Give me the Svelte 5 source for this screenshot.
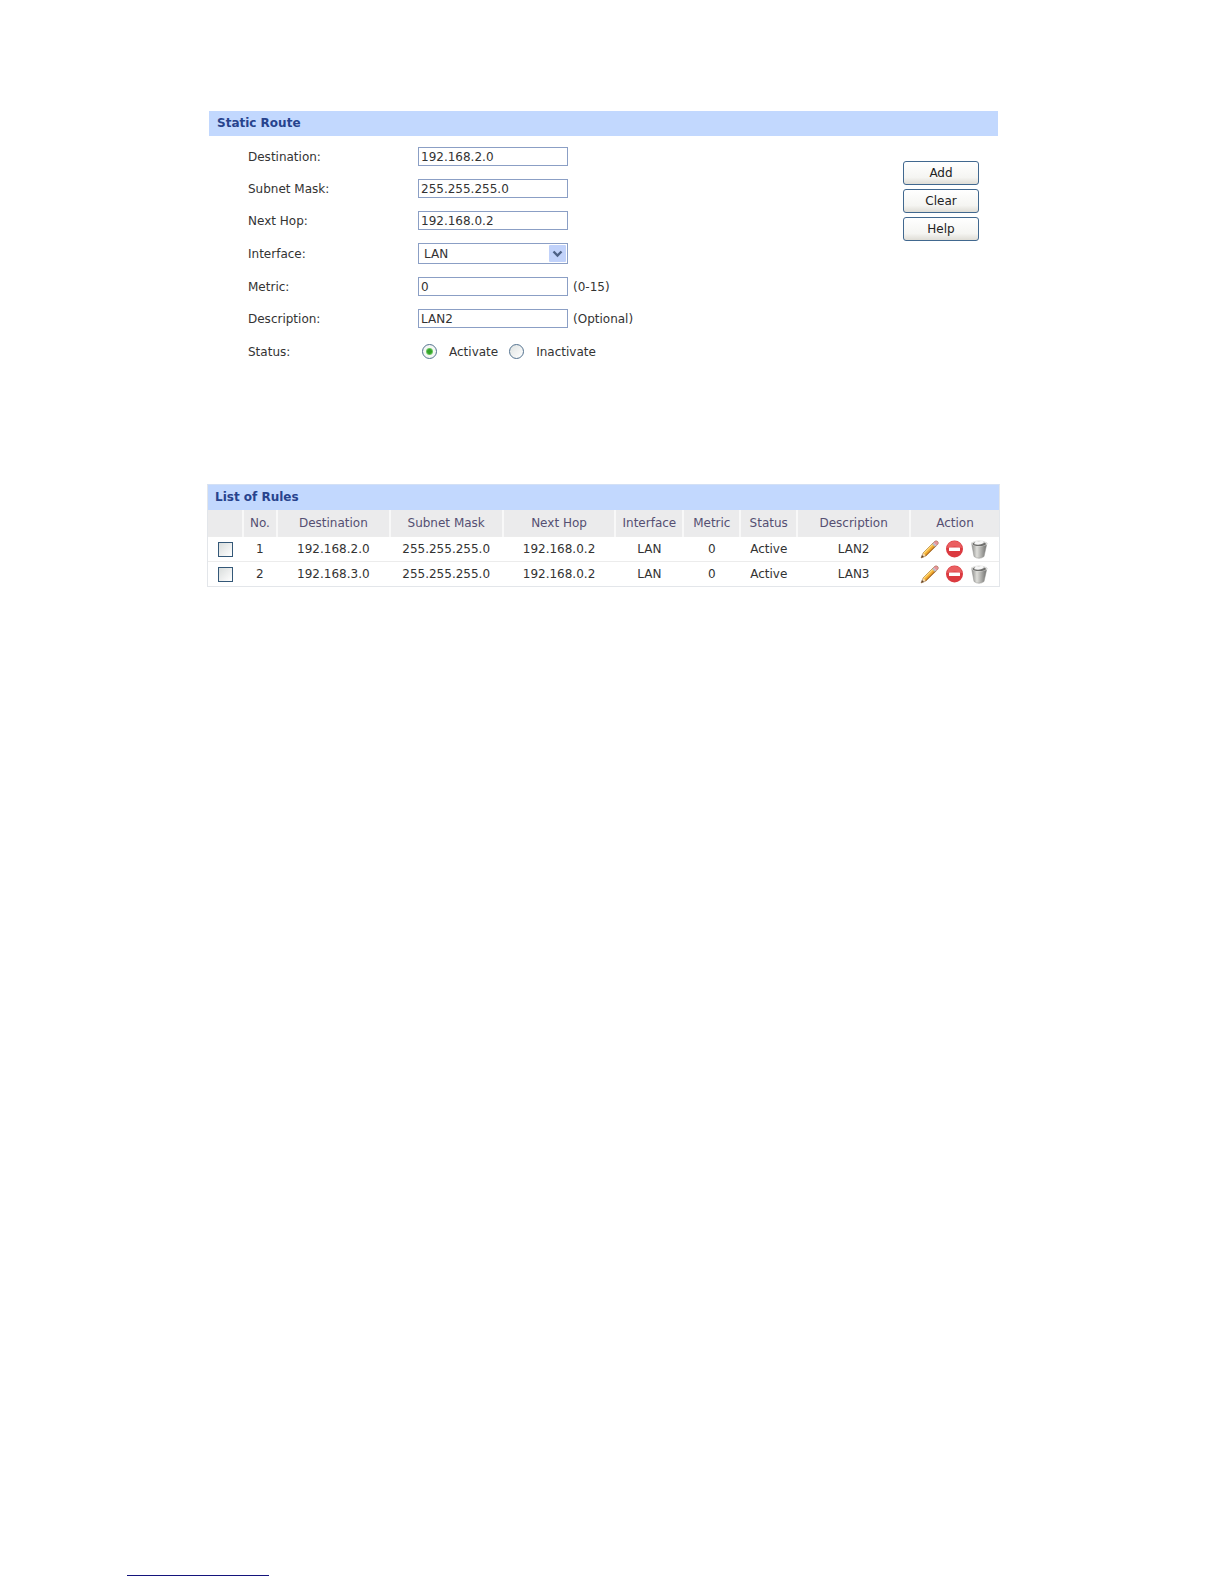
<script>
	const interfaces = ['LAN', 'WAN1', 'WAN2'];
	const columns = [
		{ key: 'no', label: 'No.', width: 34 },
		{ key: 'destination', label: 'Destination', width: 113 },
		{ key: 'mask', label: 'Subnet Mask', width: 113 },
		{ key: 'nextHop', label: 'Next Hop', width: 113 },
		{ key: 'iface', label: 'Interface', width: 68 },
		{ key: 'metric', label: 'Metric', width: 57 },
		{ key: 'status', label: 'Status', width: 57 },
		{ key: 'description', label: 'Description', width: 113 }
	];

	const emptyRoute = {
		destination: '',
		mask: '',
		nextHop: '',
		iface: 'LAN',
		metric: '0',
		description: '',
		status: 'Active'
	};

	let route = $state({
		destination: '192.168.2.0',
		mask: '255.255.255.0',
		nextHop: '192.168.0.2',
		iface: 'LAN',
		metric: '0',
		description: 'LAN2',
		status: 'Active'
	});

	let rules = $state([
		{
			destination: '192.168.2.0',
			mask: '255.255.255.0',
			nextHop: '192.168.0.2',
			iface: 'LAN',
			metric: '0',
			status: 'Active',
			description: 'LAN2',
			selected: false
		},
		{
			destination: '192.168.3.0',
			mask: '255.255.255.0',
			nextHop: '192.168.0.2',
			iface: 'LAN',
			metric: '0',
			status: 'Active',
			description: 'LAN3',
			selected: false
		}
	]);

	function addRoute(event) {
		event.preventDefault();
		rules.push({ ...route, selected: false });
	}

	function clearForm() {
		route = { ...emptyRoute };
	}

	function editRule(rule) {
		const { selected, ...values } = rule;
		route = values;
	}

	function toggleRule(rule) {
		rule.status = rule.status === 'Active' ? 'Inactive' : 'Active';
	}

	function removeRule(index) {
		rules.splice(index, 1);
	}
</script>

{#snippet textRow(id, label, key, hint)}
	<div class="row">
		<label class="name" for={id}>{label}</label>
		<input class="text" type="text" {id} bind:value={route[key]} />
		{#if hint}<span class="hint">{hint}</span>{/if}
	</div>
{/snippet}

<div class="page">
	<main>
		<form class="route" onsubmit={addRoute}>
			<h2 class="title">Static Route</h2>
			<div class="route-body">
				<div class="fields">
					{@render textRow('destination', 'Destination:', 'destination')}
					{@render textRow('mask', 'Subnet Mask:', 'mask')}
					{@render textRow('next-hop', 'Next Hop:', 'nextHop')}
					<div class="row">
						<label class="name" for="iface">Interface:</label>
						<select id="iface" bind:value={route.iface}>
							{#each interfaces as name}
								<option value={name}>{name}</option>
							{/each}
						</select>
					</div>
					{@render textRow('metric', 'Metric:', 'metric', '(0-15)')}
					{@render textRow('description', 'Description:', 'description', '(Optional)')}
					<div class="row status" role="radiogroup" aria-labelledby="status-label">
						<span class="name" id="status-label">Status:</span>
						<label class="choice">
							<input type="radio" name="status" value="Active" bind:group={route.status} />
							Activate
						</label>
						<label class="choice">
							<input type="radio" name="status" value="Inactive" bind:group={route.status} />
							Inactivate
						</label>
					</div>
				</div>
				<div class="buttons">
					<button type="submit">Add</button>
					<button type="button" onclick={clearForm}>Clear</button>
					<button type="button">Help</button>
				</div>
			</div>
		</form>

		<section class="rules">
			<h2 class="title">List of Rules</h2>
			<table>
				<colgroup>
					<col style="width: {35 / 7.92}%" />
					{#each columns as column}
						<col style="width: {column.width / 7.92}%" />
					{/each}
					<col style="width: {89 / 7.92}%" />
				</colgroup>
				<thead>
					<tr>
						<th></th>
						{#each columns as column}
							<th>{column.label}</th>
						{/each}
						<th>Action</th>
					</tr>
				</thead>
				<tbody>
					{#each rules as rule, index}
						<tr>
							<td>
								<input
									type="checkbox"
									aria-label="Select rule {index + 1}"
									bind:checked={rule.selected}
								/>
							</td>
							{#each columns as column}
								<td>{column.key === 'no' ? index + 1 : rule[column.key]}</td>
							{/each}
							<td>
								<div class="actions">
									<button type="button" aria-label="Edit" onclick={() => editRule(rule)}>
										<svg width="19" height="19" viewBox="0 0 19 19">
											<path d="M1 18l2-5 3 3z" fill="#f3d9ae" />
											<path d="M1 18l1-3 2 2z" fill="#54402c" />
											<path d="M3 13L13 3l3 3L6 16z" fill="#f4ae32" />
											<path d="M3 13L13 3l1 1L4 14z" fill="#ffdc79" />
											<path d="M5 15.500L15.500 5l.8 1L6 16z" fill="#b87522" />
											<path d="M12 4l1.500-1.500 3 3L15 7z" fill="#b9bdc6" />
											<path d="M13.500 2.500L15 1q2-.5 3 .8t-.2 2.500L16.500 5.500z" fill="#e6949b" />
											<path
												d="M1 18l2-5L15 1q2-.5 3 .8t-.2 2.500L6 16z"
												fill="none"
												stroke="#97663b"
												stroke-width=".5"
											/>
										</svg>
									</button>
									<button type="button" aria-label="Toggle" onclick={() => toggleRule(rule)}>
										<svg width="19" height="19" viewBox="0 0 19 19">
											<circle cx="9.5" cy="9" r="8.5" fill="#db3a40" />
											<path d="M2 8a7.5 7 0 0 1 15 0q-7-3-15 0z" fill="#ea5f61" />
											<rect x="4" y="7.500" width="11" height="3.500" rx=".6" fill="#fff" />
										</svg>
									</button>
									<button type="button" aria-label="Delete" onclick={() => removeRule(index)}>
										<svg width="19" height="19" viewBox="0 0 19 19">
											<defs>
												<linearGradient id="bin-{index}">
													<stop offset="0" stop-color="#8a8a88" />
													<stop offset=".35" stop-color="#dededa" />
													<stop offset="1" stop-color="#6c6c6a" />
												</linearGradient>
											</defs>
											<path
												d="M1.500 3l2.500 13.500q5 3.500 10 0l3-13.500z"
												fill="url(#bin-{index})"
												stroke="#8d8d8b"
												stroke-width=".5"
											/>
											<ellipse cx="9.2" cy="3.5" rx="8.2" ry="3" fill="#dcdcda" />
											<ellipse cx="9.2" cy="4" rx="6.8" ry="2" fill="#6e6e6c" />
											<path d="M4 4l2-3 3 1 3-2 2 3q-5 3-10 1z" fill="#f7f7f7" />
										</svg>
									</button>
								</div>
							</td>
						</tr>
					{/each}
				</tbody>
			</table>
		</section>
	</main>

	<footer>
		<hr />
	</footer>
</div>

<style>
	:global(body) {
		margin: 0;
		background: #fff;
	}

	.page {
		box-sizing: border-box;
		min-height: 100vh;
		display: flex;
		flex-direction: column;
		font-family: 'DejaVu Sans', Verdana, sans-serif;
		font-size: 12px;
		line-height: 16px;
		color: #333;
	}

	main {
		padding: 111px 224px 0 207px;
	}

	.title {
		margin: 0;
		padding: 0 8px;
		background: #c2d8fe;
		color: #27438d;
		font-size: 12px;
		font-weight: bold;
		line-height: 25px;
	}

	.route {
		margin: 0 2px;
	}

	.route-body {
		display: flex;
		justify-content: space-between;
		padding: 11px 19px 0 39px;
	}

	.fields {
		display: flex;
		flex-direction: column;
		gap: 13px;
	}

	.row {
		display: flex;
		align-items: center;
	}

	.name {
		width: 170px;
	}

	.text,
	select {
		box-sizing: border-box;
		width: 150px;
		height: 19px;
		margin: 0;
		padding: 0 2px;
		border: 1px solid #8b9fc5;
		border-radius: 0;
		background: #fff;
		color: #333;
		font: inherit;
	}

	select {
		height: 21px;
		padding: 0 5px;
		appearance: none;
		background: #fff
			url("data:image/svg+xml,%3Csvg xmlns='http://www.w3.org/2000/svg' width='17' height='17'%3E%3Crect width='17' height='17' rx='1' fill='%23c1d2fa'/%3E%3Cpath d='M4.500 6.500l4 4 4-4' fill='none' stroke='%234d6185' stroke-width='2.400'/%3E%3C/svg%3E")
			no-repeat right 1px center;
	}

	.hint {
		margin-left: 5px;
	}

	.status {
		height: 21px;
	}

	.choice {
		display: flex;
		align-items: center;
		gap: 12px;
		margin-left: 4px;
	}

	.choice + .choice {
		margin-left: 11px;
	}

	.choice input {
		appearance: none;
		box-sizing: border-box;
		width: 15px;
		height: 15px;
		margin: 0;
		border: 1px solid #53728f;
		border-radius: 50%;
		background: linear-gradient(135deg, #dfe3e2, #fff);
	}

	.choice input:checked {
		background: radial-gradient(circle, #35a32b 0 2px, #6bc95f 3px, #f4f7f4 4px);
	}

	.buttons {
		display: flex;
		flex-direction: column;
		gap: 4px;
		padding-top: 14px;
	}

	.buttons button {
		box-sizing: border-box;
		width: 76px;
		height: 24px;
		padding: 0;
		border: 1px solid #41688f;
		border-radius: 3px;
		background: linear-gradient(#fff, #f5f5f2 70%, #dfddd6);
		color: #222;
		font: inherit;
	}

	.rules {
		margin-top: 122px;
		border: 1px solid #e3e6ea;
		border-top-color: #d3e0f5;
	}

	.rules .title {
		padding: 0 7px;
	}

	table {
		width: 100%;
		table-layout: fixed;
		border-collapse: collapse;
	}

	th,
	td {
		padding: 0;
		text-align: center;
		white-space: nowrap;
	}

	th {
		height: 26px;
		background: #ebebec;
		color: #554f72;
		font-weight: normal;
	}

	th + th {
		border-left: 2px solid #f8f8f8;
	}

	td {
		height: 24px;
		border-top: 1px solid #ececec;
	}

	td input {
		appearance: none;
		box-sizing: border-box;
		display: block;
		width: 15px;
		height: 15px;
		margin: 0 auto;
		border: 1px solid #345878;
		background: linear-gradient(135deg, #d9dddc, #fff);
	}

	td input:checked {
		background: #35a32b;
	}

	.actions {
		display: flex;
		justify-content: center;
		gap: 6px;
	}

	.actions button {
		padding: 0;
		border: 0;
		background: none;
		cursor: pointer;
	}

	.actions svg {
		display: block;
	}

	footer {
		margin-top: auto;
		padding: 24px 127px 8px;
	}

	hr {
		width: 142px;
		height: 1px;
		margin: 0;
		border: 0;
		background: #14147c;
	}
</style>
